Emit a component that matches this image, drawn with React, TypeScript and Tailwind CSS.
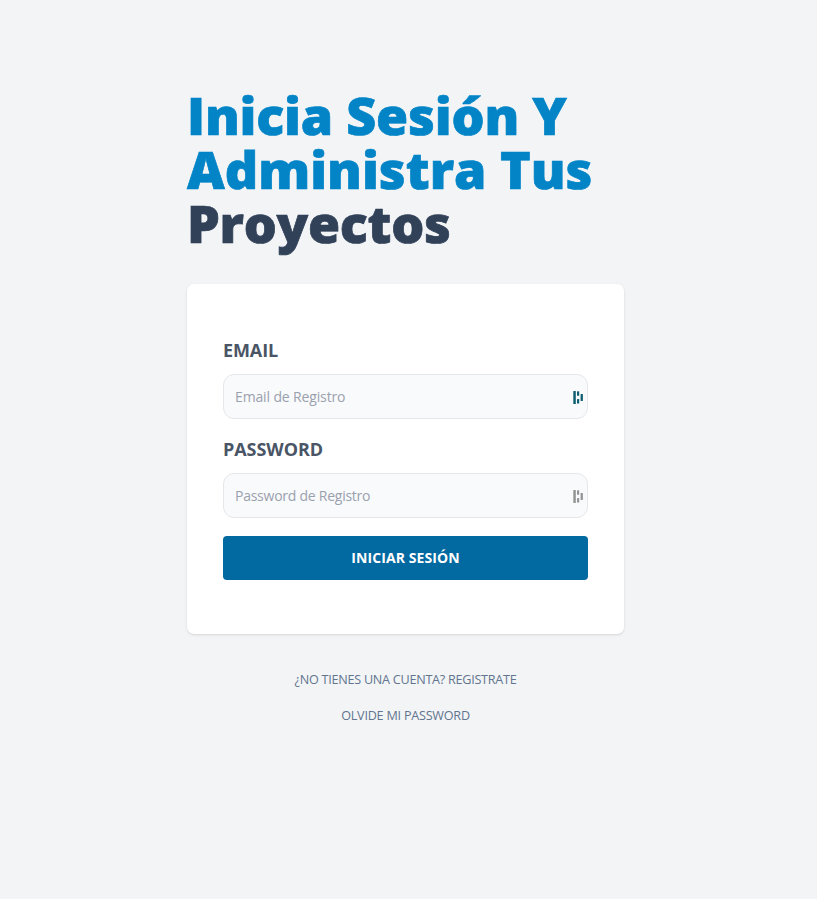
import React from "react";

function FieldMark({ className }: { className: string }) {
  return (
    <svg aria-hidden="true" viewBox="0 0 10 13" className={`mt-px h-[13px] w-[10px] shrink-0 ${className}`} fill="currentColor">
      <rect x="0.3" y="0" width="2.5" height="13" rx="0.5" />
      <rect x="4" y="0.2" width="2.2" height="4.6" rx="0.5" />
      <rect x="4" y="8" width="2.2" height="4.6" rx="0.5" />
      <rect x="7.6" y="3" width="2.3" height="7" rx="0.5" />
    </svg>
  );
}

interface FieldProps {
  id: string;
  label: string;
  type: string;
  placeholder: string;
  labelSpacing: string;
  inputSpacing: string;
  markColor: string;
}

function Field({ id, label, type, placeholder, labelSpacing, inputSpacing, markColor }: FieldProps) {
  return (
    <div className="mb-[18px]">
      <label htmlFor={id} className={`block text-[18px] font-bold uppercase leading-[25px] text-gray-600 ${labelSpacing}`}>
        {label}
      </label>
      <div className="mt-[11px] flex h-[45px] items-center rounded-[11px] border border-gray-200 bg-gray-50 pl-[11px] pr-1">
        <input
          id={id}
          type={type}
          placeholder={placeholder}
          className={`min-w-0 flex-1 bg-transparent text-[14px] outline-none placeholder:text-gray-400 ${inputSpacing}`}
        />
        <FieldMark className={markColor} />
      </div>
    </div>
  );
}

export default function App() {
  return (
    <div className="min-h-screen bg-[#f2f4f6] pl-[187px] pt-[88px] font-['Open_Sans','Noto_Sans',sans-serif]">
      <main className="w-[437px]">
        <h1 className="whitespace-nowrap text-[52px] font-black capitalize leading-[54px] text-[#0284c7] [-webkit-text-stroke:0.7px_currentColor]">
          <span className="block tracking-[-0.2px]">Inicia Sesión Y</span>
          <span className="block tracking-[0px]">Administra Tus</span>
          <span className="block tracking-[-0.28px] text-slate-700">Proyectos</span>
        </h1>
        <form className="mt-[34px] h-[350px] rounded-[7px] bg-white px-9 pt-[54px] shadow-sm">
          <Field id="email" label="Email" type="email" placeholder="Email de Registro" labelSpacing="tracking-[-0.1px]" inputSpacing="tracking-[-0.14px]" markColor="text-[#0e6070]" />
          <Field id="password" label="Password" type="password" placeholder="Password de Registro" labelSpacing="tracking-[-0.05px]" inputSpacing="tracking-[-0.25px]" markColor="text-[#949494]" />
          <button type="button" className="flex h-11 w-full items-center justify-center rounded-[4px] bg-[#0369a1] pb-px text-[14px] font-bold uppercase tracking-[0.1px] text-white">
            Iniciar Sesión
          </button>
        </form>
        <nav className="mt-9 flex flex-col items-center gap-4 text-[12.6px] uppercase leading-5 text-slate-500">
          <a className="tracking-[-0.25px]">¿No tienes una cuenta? Registrate</a>
          <a className="tracking-[-0.22px]">Olvide mi password</a>
        </nav>
      </main>
    </div>
  );
}
